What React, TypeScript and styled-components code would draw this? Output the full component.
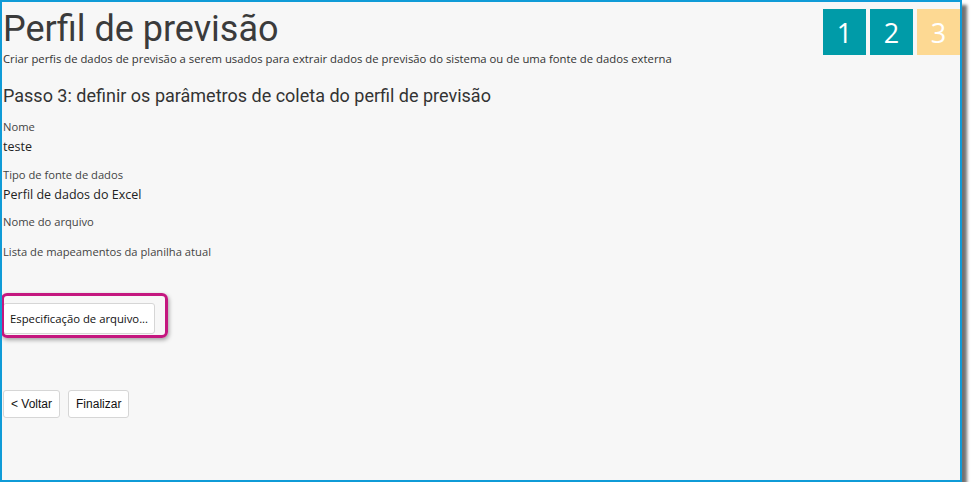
import styled, { createGlobalStyle } from 'styled-components'

const GlobalStyle = createGlobalStyle`
  html, body {
    margin: 0;
    padding: 0;
    background: #ffffff;
  }
`

// steps of the wizard

const steps = [
  { id: 1, done: true },
  { id: 2, done: true },
  { id: 3, done: false }
]

const fields = [
  { label: 'Nome', value: 'teste' },
  { label: 'Tipo de fonte de dados', value: 'Perfil de dados do Excel' },
  { label: 'Nome do arquivo', value: '' },
  { label: 'Lista de mapeamentos da planilha atual', value: '' }
]

const Frame = styled.div`
  box-sizing: border-box;
  width: 962px;
  height: 482px;
  border: 2px solid #0f9bd7;
  background: #f7f7f7;
  box-shadow: 5px 5px 3px rgba(0, 0, 0, 0.55);
  overflow: hidden;
  padding: 0 0 0 1px;
  font-family: 'Open Sans', sans-serif;
  color: #333;
`

const Header = styled.div`
  display: flex;
  justify-content: space-between;
  align-items: flex-start;
`

const TitleBlock = styled.div`
  display: flex;
  flex-direction: column;
`

const Title = styled.h1`
  margin: 6px 0 0 0;
  font-family: Roboto, sans-serif;
  font-weight: 400;
  font-size: 36px;
  line-height: 42px;
  color: #3b3b3b;
`

const Subtitle = styled.div`
  margin-top: 2px;
  font-size: 11.3px;
  line-height: 14px;
  color: #333;
`

const Steps = styled.div`
  display: flex;
  gap: 4px;
  margin-top: 7px;
`

const Step = styled.div<{ $done: boolean }>`
  width: 43px;
  height: 46px;
  display: flex;
  align-items: center;
  justify-content: center;
  background: ${p => (p.$done ? '#009ba8' : '#fdd993')};
  color: #fff;
  font-size: 27px;
`

const StepTitle = styled.h2`
  margin: 19px 0 12px 0;
  font-family: Roboto, sans-serif;
  font-weight: 400;
  font-size: 18px;
  line-height: 22px;
  color: #333;
`

const Field = styled.div`
  display: flex;
  flex-direction: column;
  margin-bottom: 8px;
  min-height: 22px;
`

const Label = styled.div`
  font-size: 11.2px;
  line-height: 15px;
  color: #444;
`

const Value = styled.div`
  margin: 3px 0 2.5px 0;
  font-size: 12.5px;
  line-height: 19px;
  color: #222;
`

// magenta callout drawn over the file button
const Highlighted = styled.div`
  position: relative;
  display: inline-block;
  margin-top: 29px;

  &::before {
    content: '';
    position: absolute;
    top: -10px;
    left: -2px;
    right: -13px;
    bottom: -4px;
    border: 3px solid #c4177f;
    border-radius: 6px;
    box-shadow: 1px 2px 4px rgba(0, 0, 0, 0.35);
    pointer-events: none;
  }
`

const Button = styled.button`
  display: block;
  font-family: 'Liberation Sans', Arial, sans-serif;
  font-size: 12px;
  color: #111;
  background: #fff;
  border: 1px solid #d6d6d6;
  border-radius: 3px;
  padding: 0 7px;
  height: 28px;
`

const FileButton = styled(Button)`
  font-family: 'Open Sans', sans-serif;
  font-size: 11.3px;
  height: 31px;
  padding: 0 6px;
`

const Footer = styled.div`
  display: flex;
  gap: 8px;
  margin-top: 56px;
`

const App = () => {
  return (
    <>
      <GlobalStyle />
      <Frame>
        <Header>
          <TitleBlock>
            <Title>Perfil de previsão</Title>
            <Subtitle>Criar perfis de dados de previsão a serem usados para extrair dados de previsão do sistema ou de uma fonte de dados externa</Subtitle>
          </TitleBlock>
          <Steps>
            {steps.map(item => (
              <Step key={item.id} $done={item.done}>{item.id}</Step>
            ))}
          </Steps>
        </Header>

        <StepTitle>Passo 3: definir os parâmetros de coleta do perfil de previsão</StepTitle>

        {fields.map(item => (
          <Field key={item.label}>
            <Label>{item.label}</Label>
            {item.value ? <Value>{item.value}</Value> : null}
          </Field>
        ))}

        <Highlighted>
          <FileButton>Especificação de arquivo...</FileButton>
        </Highlighted>

        <Footer>
          <Button>&lt; Voltar</Button>
          <Button>Finalizar</Button>
        </Footer>
      </Frame>
    </>
  )
}

export default App
